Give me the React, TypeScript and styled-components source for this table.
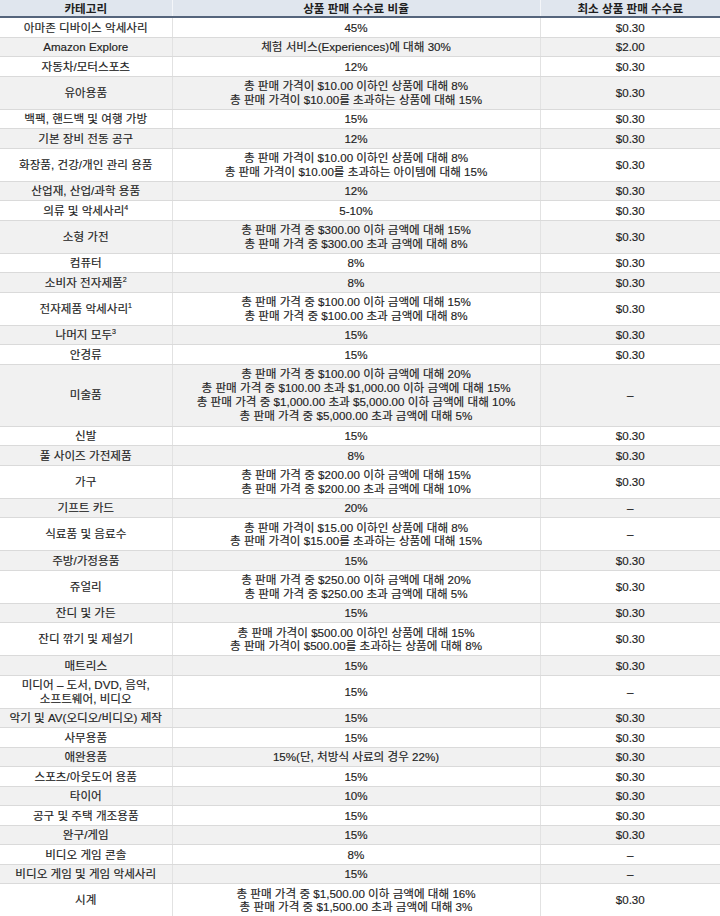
import React from "react";
import styled, { createGlobalStyle } from "styled-components";

const Global = createGlobalStyle`
  html, body { margin: 0; padding: 0; background: #ffffff; }
  body {
    font-family: "Liberation Sans", "Noto Sans CJK KR", sans-serif;
    -webkit-font-smoothing: antialiased;
  }
`;

const Table = styled.table`
  width: 720px;
  border-collapse: collapse;
  table-layout: fixed;
  font-size: 11.6px;
  color: #222;
  -webkit-text-stroke: 0.15px #222;
`;

const HeadCell = styled.th`
  background: #e0e6ee;
  font-weight: 700;
  color: #1e1e1e;
  height: 16px;
  padding: 0 4px;
  line-height: 15px;
  text-align: center;
  border-bottom: 2px solid #55657c;
  border-left: 1px solid #f4f6f9;
  -webkit-text-stroke: 0;
  &:first-child { border-left: none; }
`;

const Row = styled.tr<{ $alt: boolean }>`
  background: ${(p) => (p.$alt ? "#f1f1f1" : "#ffffff")};
`;

const Cell = styled.td<{ $lh?: number }>`
  text-align: center;
  vertical-align: middle;
  padding: 2.5px 4px 2.5px;
  line-height: ${(p) => p.$lh ?? 13.5}px;
  border-bottom: 1px solid #dadada;
  border-left: 1px solid #e2e2e2;
  &:first-child { border-left: none; }
`;

const Sup = styled.sup`
  font-size: 7px;
  line-height: 0;
  vertical-align: 5px;
`;

type R = { cat: React.ReactNode; rate: string[]; min: string; lh?: number };

const rows: R[] = [
  { cat: "아마존 디바이스 악세사리", rate: ["45%"], min: "$0.30" },
  { cat: "Amazon Explore", rate: ["체험 서비스(Experiences)에 대해 30%"], min: "$2.00" },
  { cat: "자동차/모터스포츠", rate: ["12%"], min: "$0.30" },
  { cat: "유아용품", rate: ["총 판매 가격이 $10.00 이하인 상품에 대해 8%", "총 판매 가격이 $10.00를 초과하는 상품에 대해 15%"], min: "$0.30" },
  { cat: "백팩, 핸드백 및 여행 가방", rate: ["15%"], min: "$0.30" },
  { cat: "기본 장비 전동 공구", rate: ["12%"], min: "$0.30" },
  { cat: "화장품, 건강/개인 관리 용품", rate: ["총 판매 가격이 $10.00 이하인 상품에 대해 8%", "총 판매 가격이 $10.00를 초과하는 아이템에 대해 15%"], min: "$0.30" },
  { cat: "산업재, 산업/과학 용품", rate: ["12%"], min: "$0.30" },
  { cat: <>의류 및 악세사리<Sup>4</Sup></>, rate: ["5-10%"], min: "$0.30" },
  { cat: "소형 가전", rate: ["총 판매 가격 중 $300.00 이하 금액에 대해 15%", "총 판매 가격 중 $300.00 초과 금액에 대해 8%"], min: "$0.30" },
  { cat: "컴퓨터", rate: ["8%"], min: "$0.30" },
  { cat: <>소비자 전자제품<Sup>2</Sup></>, rate: ["8%"], min: "$0.30" },
  { cat: <>전자제품 악세사리<Sup>1</Sup></>, rate: ["총 판매 가격 중 $100.00 이하 금액에 대해 15%", "총 판매 가격 중 $100.00 초과 금액에 대해 8%"], min: "$0.30" },
  { cat: <>나머지 모두<Sup>3</Sup></>, rate: ["15%"], min: "$0.30" },
  { cat: "안경류", rate: ["15%"], min: "$0.30" },
  {
    cat: "미술품",
    rate: [
      "총 판매 가격 중 $100.00 이하 금액에 대해 20%",
      "총 판매 가격 중 $100.00 초과 $1,000.00 이하 금액에 대해 15%",
      "총 판매 가격 중 $1,000.00 초과 $5,000.00 이하 금액에 대해 10%",
      "총 판매 가격 중 $5,000.00 초과 금액에 대해 5%",
    ],
    min: "–",
    lh: 14,
  },
  { cat: "신발", rate: ["15%"], min: "$0.30" },
  { cat: "풀 사이즈 가전제품", rate: ["8%"], min: "$0.30" },
  { cat: "가구", rate: ["총 판매 가격 중 $200.00 이하 금액에 대해 15%", "총 판매 가격 중 $200.00 초과 금액에 대해 10%"], min: "$0.30" },
  { cat: "기프트 카드", rate: ["20%"], min: "–" },
  { cat: "식료품 및 음료수", rate: ["총 판매 가격이 $15.00 이하인 상품에 대해 8%", "총 판매 가격이 $15.00를 초과하는 상품에 대해 15%"], min: "–" },
  { cat: "주방/가정용품", rate: ["15%"], min: "$0.30" },
  { cat: "쥬얼리", rate: ["총 판매 가격 중 $250.00 이하 금액에 대해 20%", "총 판매 가격 중 $250.00 초과 금액에 대해 5%"], min: "$0.30" },
  { cat: "잔디 및 가든", rate: ["15%"], min: "$0.30" },
  { cat: "잔디 깎기 및 제설기", rate: ["총 판매 가격이 $500.00 이하인 상품에 대해 15%", "총 판매 가격이 $500.00를 초과하는 상품에 대해 8%"], min: "$0.30" },
  { cat: "매트리스", rate: ["15%"], min: "$0.30" },
  { cat: <>미디어 – 도서, DVD, 음악,<br />소프트웨어, 비디오</>, rate: ["15%"], min: "–" },
  { cat: "악기 및 AV(오디오/비디오) 제작", rate: ["15%"], min: "$0.30" },
  { cat: "사무용품", rate: ["15%"], min: "$0.30" },
  { cat: "애완용품", rate: ["15%(단, 처방식 사료의 경우 22%)"], min: "$0.30" },
  { cat: "스포츠/아웃도어 용품", rate: ["15%"], min: "$0.30" },
  { cat: "타이어", rate: ["10%"], min: "$0.30" },
  { cat: "공구 및 주택 개조용품", rate: ["15%"], min: "$0.30" },
  { cat: "완구/게임", rate: ["15%"], min: "$0.30" },
  { cat: "비디오 게임 콘솔", rate: ["8%"], min: "–" },
  { cat: "비디오 게임 및 게임 악세사리", rate: ["15%"], min: "–" },
  { cat: "시계", rate: ["총 판매 가격 중 $1,500.00 이하 금액에 대해 16%", "총 판매 가격 중 $1,500.00 초과 금액에 대해 3%"], min: "$0.30" },
];

export default function App() {
  return (
    <>
      <Global />
      <Table>
        <colgroup>
          <col style={{ width: 172 }} />
          <col style={{ width: 368 }} />
          <col style={{ width: 180 }} />
        </colgroup>
        <thead>
          <tr>
            <HeadCell>카테고리</HeadCell>
            <HeadCell>상품 판매 수수료 비율</HeadCell>
            <HeadCell>최소 상품 판매 수수료</HeadCell>
          </tr>
        </thead>
        <tbody>
          {rows.map((r, i) => (
            <Row key={i} $alt={i % 2 === 1}>
              <Cell $lh={r.lh}>{r.cat}</Cell>
              <Cell $lh={r.lh}>
                {r.rate.map((t, j) => (
                  <React.Fragment key={j}>
                    {j > 0 && <br />}
                    {t}
                  </React.Fragment>
                ))}
              </Cell>
              <Cell $lh={r.lh}>{r.min}</Cell>
            </Row>
          ))}
        </tbody>
      </Table>
    </>
  );
}
